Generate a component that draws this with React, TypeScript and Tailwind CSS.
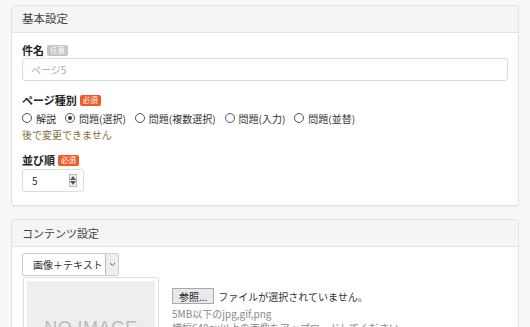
import React from "react";

const font = { fontFamily: '"Noto Sans CJK JP", "Noto Sans", sans-serif' };

function Badge({ kind, children }: { kind: "req" | "opt"; children: React.ReactNode }) {
  return (
    <span
      className={
        "ml-[3px] inline-flex h-[11px] items-center rounded-[2px] px-[3px] text-[7.5px] font-normal leading-none text-white " +
        (kind === "req" ? "bg-[#f15a22]" : "bg-[#c4c4c4]")
      }
    >
      {children}
    </span>
  );
}

function Radio({ checked, label }: { checked?: boolean; label: string }) {
  return (
    <span className="mr-[9px] inline-flex items-center">
      <span className="mr-[4px] flex h-[10px] w-[10px] items-center justify-center rounded-full border border-[#555] bg-white">
        {checked && <span className="h-[4px] w-[4px] rounded-full bg-[#333]" />}
      </span>
      <span>{label}</span>
    </span>
  );
}

export default function App() {
  return (
    <div className="h-[327px] w-[530px] overflow-hidden bg-[#f8f8f8] pt-[5px] text-[11px] text-[#333]" style={font}>
      <div className="mx-[11px] rounded-[3px] border border-[#e3e3e3] bg-white shadow-[0_1px_1px_rgba(0,0,0,0.05)]">
        <div className="flex h-[27px] items-center border-b border-[#e3e3e3] bg-[#f5f5f5] px-[10px] text-[11.5px] text-[#444]">
          基本設定
        </div>
        <div className="px-[10px] pb-[13px] pt-[10px]">
          <div className="flex h-[14px] items-center text-[11px] font-bold text-[#222]">
            件名<Badge kind="opt">任意</Badge>
          </div>
          <div className="mt-[1px] flex h-[23px] items-center rounded-[3px] border border-[#dcdcdc] px-[8px] text-[10px] text-[#aaa]">
            ページ5
          </div>
          <div className="mt-[12px] flex h-[14px] items-center text-[11px] font-bold text-[#222]">
            ページ種別<Badge kind="req">必須</Badge>
          </div>
          <div className="mt-[3px] flex h-[16px] items-center text-[10px] text-[#333]">
            <Radio label="解説" />
            <Radio checked label="問題(選択)" />
            <Radio label="問題(複数選択)" />
            <Radio label="問題(入力)" />
            <Radio label="問題(並替)" />
          </div>
          <div className="mt-[1px] text-[10px] leading-[16px] text-[#8a6d3b]">後で変更できません</div>
          <div className="mt-[10px] flex h-[14px] items-center text-[11px] font-bold text-[#222]">
            並び順<Badge kind="req">必須</Badge>
          </div>
          <div className="mt-[2px] flex h-[23px] w-[62px] items-center justify-between rounded-[3px] border border-[#dcdcdc] pl-[9px] pr-[6px] text-[10px] text-[#333]">
            <span>5</span>
            <span className="flex h-[13px] w-[8px] flex-col items-center justify-center border border-[#bbb] bg-[#f0f0f0]">
              <svg width="6" height="4" viewBox="0 0 6 4"><path d="M0 4 L3 0 L6 4 Z" fill="#555" /></svg>
              <svg width="6" height="4" viewBox="0 0 6 4" className="mt-[1px]"><path d="M0 0 L3 4 L6 0 Z" fill="#555" /></svg>
            </span>
          </div>
        </div>
      </div>

      <div className="mx-[11px] mt-[13px] rounded-[3px] border border-[#e3e3e3] bg-white">
        <div className="flex h-[27px] items-center border-b border-[#e3e3e3] bg-[#f5f5f5] px-[10px] text-[11px] text-[#444]">
          コンテンツ設定
        </div>
        <div className="flex px-[10px] pt-[6px]">
          <div className="flex flex-col">
            <div className="flex h-[23px] w-[97px] items-center rounded-[2px] border border-[#ccc] bg-white text-[10px] text-[#333]">
              <span className="flex-1 pl-[10px]">画像＋テキスト</span>
              <span className="flex h-full w-[13px] items-center justify-center border-l border-[#bbb] bg-[#eee]">
                <svg width="7" height="5" viewBox="0 0 7 5"><path d="M1 1 L3.5 3.5 L6 1" stroke="#555" fill="none" strokeWidth="1" /></svg>
              </span>
            </div>
            <div className="ml-[1px] mt-[1px] h-[100px] w-[136px] rounded-[2px] border border-[#ddd] bg-white p-[3px]">
              <div className="flex h-full justify-center bg-[#eeeeee] pt-[37px] text-[18px] leading-[20px] tracking-wide text-[#bbb]" style={{ fontFamily: '"Liberation Sans", Arial, sans-serif' }}>
                NO IMAGE
              </div>
            </div>
          </div>
          <div className="ml-[13px] mt-[35px] flex flex-col">
            <div className="flex items-center text-[10px]">
              <span className="flex h-[16px] items-center border border-[#aaa] bg-[#e9e9e9] px-[6px] text-[10px] text-[#222]">参照...</span>
              <span className="ml-[4px] text-[#333]">ファイルが選択されていません。</span>
            </div>
            <div className="mt-[3px] text-[10px] leading-[14px] text-[#888]">5MB以下のjpg,gif,png</div>
            <div className="text-[10px] leading-[14px] text-[#888]">横幅640px以上の画像をアップロードしてください</div>
          </div>
        </div>
      </div>
    </div>
  );
}
